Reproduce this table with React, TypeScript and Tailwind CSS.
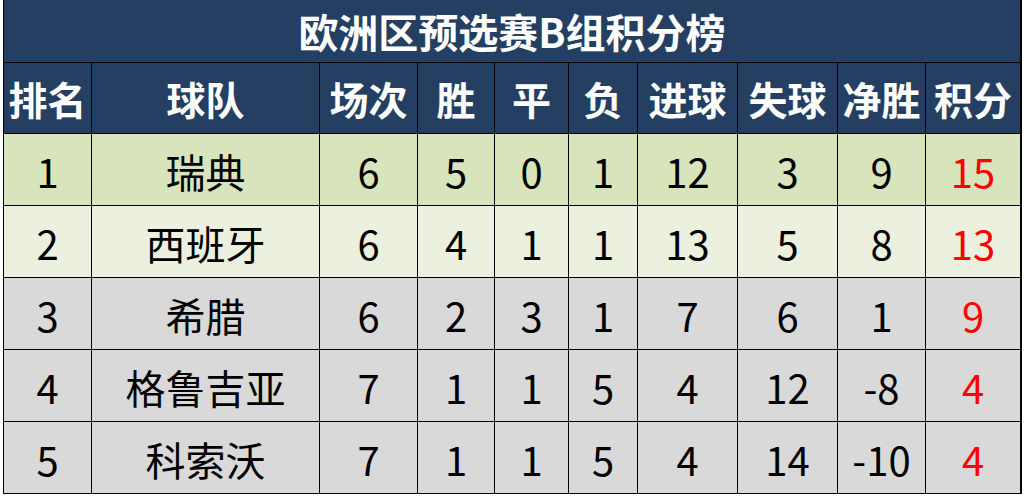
import React from "react";

const headers = ["排名", "球队", "场次", "胜", "平", "负", "进球", "失球", "净胜", "积分"];
const rows: (string | number)[][] = [
  [1, "瑞典", 6, 5, 0, 1, 12, 3, 9, 15],
  [2, "西班牙", 6, 4, 1, 1, 13, 5, 8, 13],
  [3, "希腊", 6, 2, 3, 1, 7, 6, 1, 9],
  [4, "格鲁吉亚", 7, 1, 1, 5, 4, 12, -8, 4],
  [5, "科索沃", 7, 1, 1, 5, 4, 14, -10, 4],
];
const rowBg = ["bg-[#d8e4bc]", "bg-[#ebf1de]", "bg-[#d9d9d9]", "bg-[#d9d9d9]", "bg-[#d9d9d9]"];

export default function App() {
  return (
    <div
      className="w-[1028px] h-[500px] bg-white flex"
      style={{ fontFamily: '"Noto Sans CJK SC", "Noto Sans", sans-serif' }}
    >
      <div className="w-[3px] shrink-0" />
      <div className="flex flex-col">
        <div className="grid grid-cols-[87px_227px_97px_76px_73px_68px_99px_99px_87px_94px] gap-px bg-black border border-black border-t-0 w-[1019px]">
          <div className="col-span-10 h-[62px] bg-[#243f62] flex items-center justify-center text-white font-bold text-[40px] leading-none">
            欧洲区预选赛B组积分榜
          </div>
          {headers.map((h) => (
            <div
              key={h}
              className="h-[70px] bg-[#243f62] flex items-center justify-center text-white font-bold text-[39px] leading-none whitespace-nowrap"
            >
              {h}
            </div>
          ))}
          {rows.map((r, i) =>
            r.map((c, j) => (
              <div
                key={`${i}-${j}`}
                className={`h-[71px] ${rowBg[i]} flex items-center justify-center text-[40px] leading-none whitespace-nowrap pt-[2px] ${
                  j === 9 ? "text-[#ff0000]" : "text-black"
                }`}
              >
                {c}
              </div>
            ))
          )}
        </div>
      </div>
    </div>
  );
}
